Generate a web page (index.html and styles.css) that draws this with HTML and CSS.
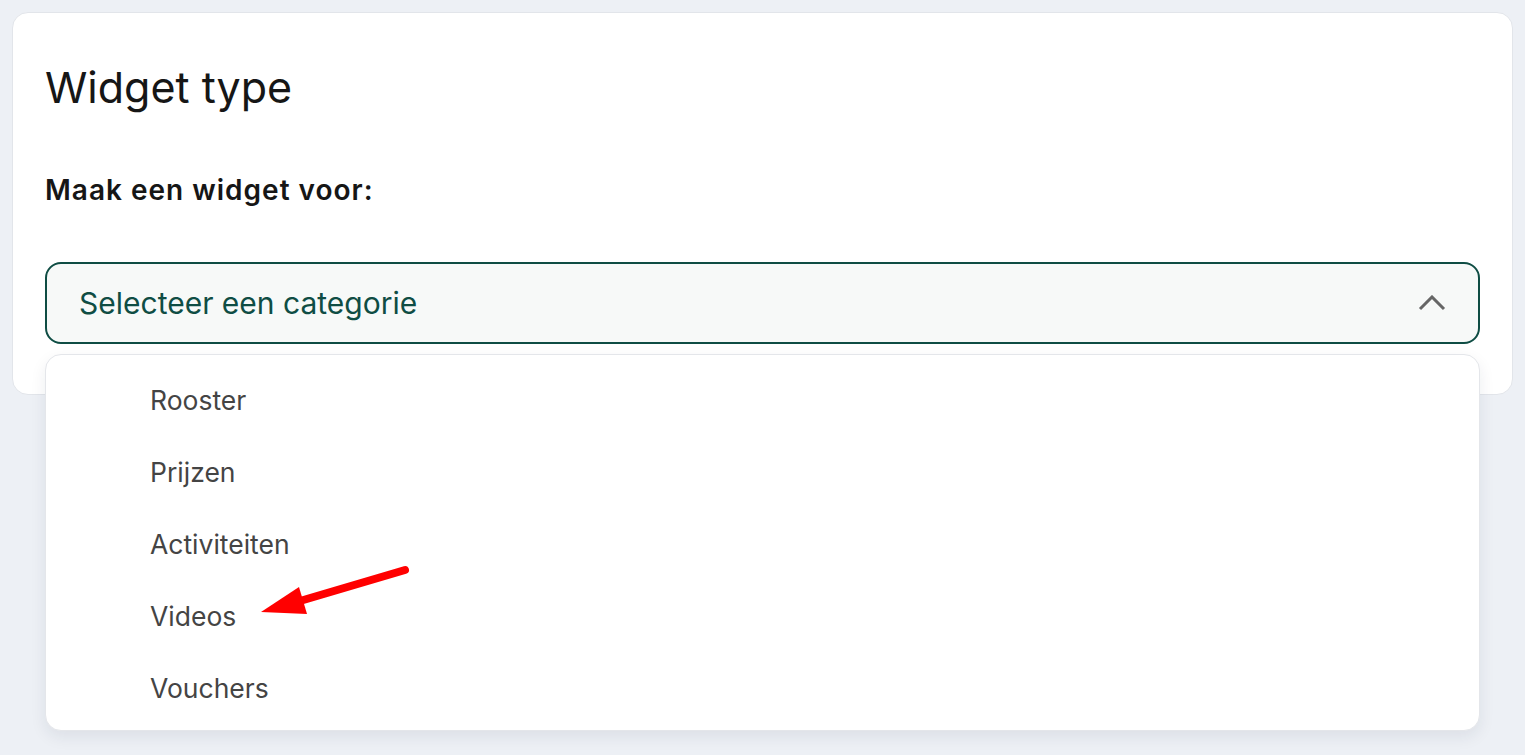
FILE: index.html
```html
<!DOCTYPE html>
<html>
<head>
    <meta charset="UTF-8">
    <title>Widget type</title>
    <link rel="stylesheet" href="styles.css">
</head>
<body>
<div class="card">
    <h1 class="title">Widget type</h1>
    <p class="label">Maak een widget voor:</p>
    <div class="select-wrap">
        <div class="select">
            <span class="select-text">Selecteer een categorie</span>
            <svg class="chevron" width="28" height="16" viewBox="0 0 28 16">
                <path d="M2 14 L14 2 L26 14" fill="none" stroke="#666" stroke-width="3"/>
            </svg>
        </div>
        <ul class="menu">
            <li>Rooster</li>
            <li>Prijzen</li>
            <li>Activiteiten</li>
            <li>Videos</li>
            <li>Vouchers</li>
        </ul>
    </div>
</div>
<svg class="arrow" width="1525" height="755" viewBox="0 0 1525 755">
    <line x1="405" y1="570" x2="300" y2="601" stroke="#ff0000" stroke-width="8" stroke-linecap="round"/>
    <polygon points="261,612 299,587 307,614" fill="#ff0000"/>
</svg>
</body>
</html>
```

FILE: styles.css
```css
html {
    height: 100%;
}
body {
    box-sizing: border-box;
    min-height: 100%;
    margin: 0;
    padding: 12px;
    background-color: #edf0f5;
    font-family: Inter, "Open Sans", sans-serif;
    color: #161616;
}
.card {
    background-color: #fff;
    border: 1px solid #e2e5ea;
    border-radius: 16px;
    padding: 32px 32px 50px;
}
.title {
    margin: 14px 0 0;
    font-size: 43px;
    font-weight: 400;
    line-height: 56px;
}
.label {
    margin: 57px 0 0;
    font-size: 28px;
    font-weight: 600;
    letter-spacing: 1px;
    line-height: 36px;
}
.select-wrap {
    position: relative;
    margin-top: 54px;
}
.select {
    box-sizing: border-box;
    display: flex;
    align-items: center;
    justify-content: space-between;
    height: 82px;
    padding: 0 32px 0 32px;
    background-color: #f7f9f8;
    border: 2px solid #0f4d44;
    border-radius: 16px;
}
.select-text {
    font-size: 30px;
    color: #0f4d44;
}
.menu {
    position: absolute;
    top: 92px;
    left: 0;
    right: 0;
    z-index: 1;
    margin: 0;
    padding: 9px 0 6px;
    list-style: none;
    background-color: #fff;
    border: 1px solid #e4e6ea;
    border-radius: 16px;
    box-shadow: 0 6px 16px rgba(30, 40, 60, 0.08);
}
.menu li {
    height: 72px;
    line-height: 72px;
    padding-left: 104px;
    font-size: 26.5px;
    color: #444;
}
.arrow {
    position: absolute;
    top: 0;
    left: 0;
    z-index: 2;
    pointer-events: none;
}
```
